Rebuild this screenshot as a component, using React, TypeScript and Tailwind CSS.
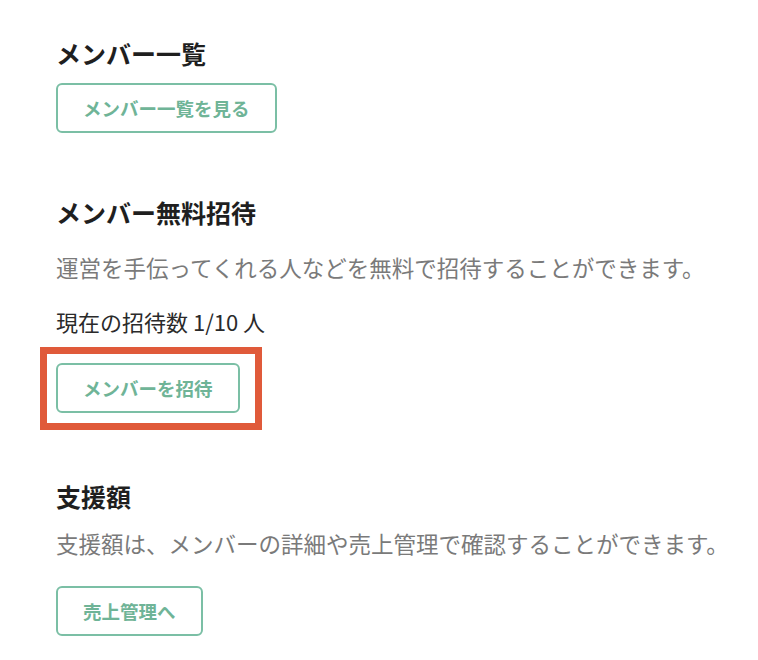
import React from "react";

const font = { fontFamily: '"Noto Sans CJK JP", "Noto Sans", sans-serif' };

function OutlineButton({ label }: { label: string }) {
  return (
    <button className="h-[50px] px-[25px] border-2 border-[#7bbfa5] rounded-[6px] bg-white text-[18.5px] font-bold text-[#6fb497] leading-none">
      {label}
    </button>
  );
}

export default function App() {
  return (
    <div className="w-[758px] h-[660px] bg-white overflow-hidden" style={font}>
      <div className="pl-[56px] pt-[35px] flex flex-col items-start">
        <h2 className="text-[25px] leading-[36px] font-bold text-[#1f1f1f]">メンバー一覧</h2>
        <div className="mt-[12px]">
          <OutlineButton label="メンバー一覧を見る" />
        </div>

        <h2 className="mt-[61px] text-[25px] leading-[36px] font-bold text-[#1f1f1f]">メンバー無料招待</h2>
        <p className="mt-[21px] text-[22.5px] leading-[33px] text-[#7a7a7a]">
          運営を手伝ってくれる人などを無料で招待することができます。
        </p>
        <p className="mt-[21px] text-[22px] leading-[33px] text-[#2a2a2a]">現在の招待数 1/10 人</p>
        <div className="relative mt-[25px]">
          <OutlineButton label="メンバーを招待" />
          <div className="absolute -left-[16px] -top-[16px] -right-[22px] -bottom-[17px] border-[7px] border-[#e05a3a] pointer-events-none" />
        </div>

        <h2 className="mt-[65px] text-[25px] leading-[36px] font-bold text-[#1f1f1f]">支援額</h2>
        <p className="mt-[13px] text-[22.5px] leading-[33px] text-[#7a7a7a]">
          支援額は、メンバーの詳細や売上管理で確認することができます。
        </p>
        <div className="mt-[26px]">
          <OutlineButton label="売上管理へ" />
        </div>
      </div>
    </div>
  );
}
